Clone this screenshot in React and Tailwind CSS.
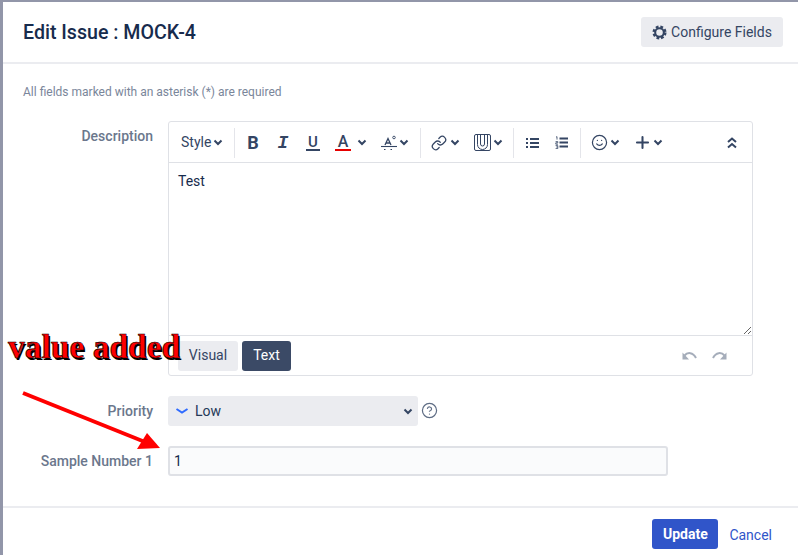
import React from "react";
import { Plus, Smile, Link, CircleHelp } from "lucide-react";

const Caret = ({ className = "" }) => (
  <svg width="10" height="7" viewBox="0 0 10 7" fill="none" stroke="#344563" strokeWidth="2" className={`shrink-0 ${className}`}>
    <path d="M1.5 1.5 5 5 8.5 1.5" />
  </svg>
);

const Divider = () => <div className="h-[30px] w-px shrink-0 bg-[#e4e5ea]" />;

const Tool = ({ className = "", children }) => (
  <div className={`flex h-[30px] shrink-0 items-center text-[#344563] ${className}`}>{children}</div>
);

const Gear = () => (
  <svg width="15" height="15" viewBox="0 0 16 16" fill="none" stroke="#344563" className="shrink-0">
    <circle cx="8" cy="8" r="4.6" strokeWidth="2.2" />
    <circle cx="8" cy="8" r="6.2" strokeWidth="2.6" strokeDasharray="2.9 2" />
  </svg>
);

const Attach = () => (
  <svg width="17" height="17" viewBox="0 0 17 17" fill="none" stroke="#344563" strokeWidth="1" className="shrink-0">
    <rect x="0.5" y="0.5" width="16" height="16" rx="1.5" />
    <path d="M3.5 1v9.5a5 5 0 0 0 10 0V1" />
    <path d="M6.5 1v9a2 2 0 0 0 4 0V1" />
  </svg>
);

const FontStyle = () => (
  <svg width="18" height="16" viewBox="0 0 18 16" fill="none" stroke="#344563" className="shrink-0">
    <path d="M5 10 8 3.5 11 10M6.2 8h3.6" strokeWidth="1.3" />
    <circle cx="14" cy="2.5" r="1.3" strokeWidth="0.9" />
    <path d="M1 11.5h16" strokeWidth="1.1" />
    <path d="M4 14.5h1.5M10.5 14.5H12" strokeWidth="1.2" />
  </svg>
);

const BulletList = () => (
  <svg width="13" height="12" viewBox="0 0 13 12" stroke="#344563" strokeWidth="2" className="shrink-0">
    <path d="M4 2H13M4 6H13M4 10H13" />
    <path d="M0 2h2M0 6h2M0 10h2" />
  </svg>
);

const NumberList = () => (
  <svg width="13" height="13" viewBox="0 0 13 13" fill="none" stroke="#344563" className="shrink-0">
    <path d="M4.5 2.5H13M4.5 6.5H13M4.5 10.5H13" strokeWidth="2" />
    <path d="M1 1.2 2 .6v3M.6 5.6h2.2v1.2H.8v1.4h2.2M.6 9.6h2.2v3H.6M1.2 11h1.6" strokeWidth="0.8" />
  </svg>
);

const DoubleUp = () => (
  <svg width="10" height="12" viewBox="0 0 10 12" fill="none" stroke="#344563" strokeWidth="2" className="shrink-0">
    <path d="M1 5 5 1.5 9 5M1 10.5 5 7 9 10.5" />
  </svg>
);

const UndoIcon = ({ className = "" }) => (
  <svg width="15" height="11" viewBox="0 0 15 11" className={`shrink-0 ${className}`}>
    <path d="M2.5 5.5C5.5 2 11 2 14 8" fill="none" stroke="#a5adba" strokeWidth="2" />
    <path d="M0.5 2.5V9.5H7Z" fill="#a5adba" />
  </svg>
);

const Toolbar = () => (
  <div className="flex h-[41px] items-center border-b border-[#dfe1e6] pt-px">
    <Tool className="w-[65px] pl-[12px]">
      <span className="text-[14px]">Style</span>
      <Caret className="ml-[2px]" />
    </Tool>
    <Divider />
    <Tool className="ml-[3px] w-[30px] justify-center">
      <span className="text-[18px] font-bold leading-none">B</span>
    </Tool>
    <Tool className="w-[30px] justify-center">
      <span className="font-['Liberation_Mono'] text-[18px] font-bold italic leading-none">I</span>
    </Tool>
    <Tool className="w-[30px] justify-center">
      <span className="border-b-2 border-[#344563] px-[2px] text-[15px] font-medium leading-[14px]">U</span>
    </Tool>
    <Tool className="w-[44px] pl-[7px]">
      <span className="w-[16px] border-b-2 border-[#e60000] text-center text-[16px] font-medium leading-[15px]">A</span>
      <Caret className="ml-[6px]" />
    </Tool>
    <Tool className="w-[48px] pl-[8px]">
      <FontStyle />
      <Caret className="ml-[1px]" />
    </Tool>
    <Divider />
    <Tool className="w-[44px] pl-[10px]">
      <Link size={16} strokeWidth={1.9} />
      <Caret className="ml-[3px]" />
    </Tool>
    <Tool className="w-[48px] pl-[9px]">
      <Attach />
      <Caret className="ml-[2px]" />
    </Tool>
    <Divider />
    <Tool className="ml-[12px] w-[29px]">
      <BulletList />
    </Tool>
    <Tool className="w-[25px]">
      <NumberList />
    </Tool>
    <Divider />
    <Tool className="ml-[10px] w-[42px]">
      <Smile size={17} strokeWidth={1.7} />
      <Caret className="ml-[2px]" />
    </Tool>
    <Tool className="w-[50px]">
      <Plus size={19} strokeWidth={2.6} />
      <Caret className="ml-[1px]" />
    </Tool>
    <Tool className="ml-[44px]">
      <DoubleUp />
    </Tool>
  </div>
);

const Field = ({ label, children, className = "" }) => (
  <div className={`flex ${className}`}>
    <div className="w-[150px] shrink-0 text-right text-[14px] font-medium text-[#6b778c]">{label}</div>
    <div className="ml-[15px] min-w-0 flex-1">{children}</div>
  </div>
);

export default function App() {
  return (
    <div className="relative h-[555px] w-[798px] overflow-hidden bg-[#9296a9] pl-[3px] pt-[2px] font-['Roboto',sans-serif]">
      <div className="flex h-full flex-col bg-white">
        <header className="flex h-[62px] shrink-0 items-center justify-between border-b-2 border-[#ebecf0] pl-[20px] pr-[15px]">
          <h1 className="mt-[2px] text-[19.6px] font-medium text-[#172b4d]">Edit Issue : MOCK-4</h1>
          <button className="flex h-[30px] w-[142px] items-center justify-center gap-[4px] rounded-[3px] bg-[#ebecf0] text-[14px] text-[#344563]">
            <Gear />
            Configure Fields
          </button>
        </header>

        <main className="flex-1 pt-[20px]">
          <p className="pl-[20px] text-[12px] leading-[16px] text-[#7a869a]">All fields marked with an asterisk (*) are required</p>

          <Field label="Description" className="mt-[21px] leading-[30px]">
            <div className="w-[585px] rounded-[3px] border border-[#dfe1e6] leading-normal">
              <Toolbar />
              <textarea
                defaultValue="Test"
                className="block h-[172px] w-full resize-y px-[9px] py-[9px] text-[14px] leading-[18px] text-[#172b4d] outline-none"
              />
              <div className="flex h-[40px] items-center border-t border-[#dfe1e6] pl-[9px]">
                <button className="h-[30px] w-[60px] rounded-[3px] bg-[#ebecf0] text-[14px] text-[#344563]">Visual</button>
                <button className="ml-[4px] h-[30px] w-[49px] rounded-[3px] bg-[#3b4a66] text-[14px] text-white">Text</button>
                <div className="ml-auto mr-[25px] flex items-center gap-[15px]">
                  <UndoIcon />
                  <UndoIcon className="-scale-x-100" />
                </div>
              </div>
            </div>
          </Field>

          <Field label="Priority" className="mt-[20px] leading-[30px]">
            <div className="flex items-center">
              <div className="flex h-[30px] w-[250px] items-center rounded-[3px] bg-[#ebecf0] pl-[7px] pr-[5px] text-[14px] text-[#253858]">
                <svg width="14" height="8" viewBox="0 0 14 8" fill="none" stroke="#2f6bff" strokeWidth="2" className="shrink-0">
                  <path d="M1.5 2 7 5.5 12.5 2" />
                </svg>
                <span className="ml-[6px]">Low</span>
                <Caret className="ml-auto" />
              </div>
              <CircleHelp size={17} strokeWidth={1.7} className="mb-[2px] ml-[3px] text-[#5e6c84]" />
            </div>
          </Field>

          <Field label="Sample Number 1" className="mt-[20px] leading-[30px]">
            <input
              defaultValue="1"
              className="block h-[30px] w-[500px] rounded-[3px] border-2 border-[#dfe1e6] bg-[#fafbfc] px-[4px] text-[14px] text-[#172b4d] outline-none"
            />
          </Field>
        </main>

        <footer className="flex h-[49px] shrink-0 items-center justify-end border-t-2 border-[#ebecf0] pr-[26px] pt-[4px]">
          <button className="h-[30px] w-[66px] rounded-[3px] bg-[#3055c9] pt-px text-[14px] font-bold text-white">Update</button>
          <button className="ml-[11px] mt-[4px] text-[14px] text-[#3055c9]">Cancel</button>
        </footer>
      </div>

      {/* annotation pasted over the screenshot */}
      <div className="absolute left-[8px] top-[328px] whitespace-nowrap font-['Liberation_Serif',serif] text-[33.5px] font-bold leading-[38px] text-[#ff0000] [-webkit-text-stroke:0.6px_#000] [text-shadow:1.5px_1.5px_0_#000]">
        value added
      </div>
      <svg width="150" height="70" viewBox="0 0 150 70" className="absolute left-[20px] top-[390px]">
        <path d="M3 3 125 52" stroke="#ff0000" strokeWidth="4" fill="none" />
        <path d="M140 58 117 59 127 43Z" fill="#ff0000" />
      </svg>
    </div>
  );
}
